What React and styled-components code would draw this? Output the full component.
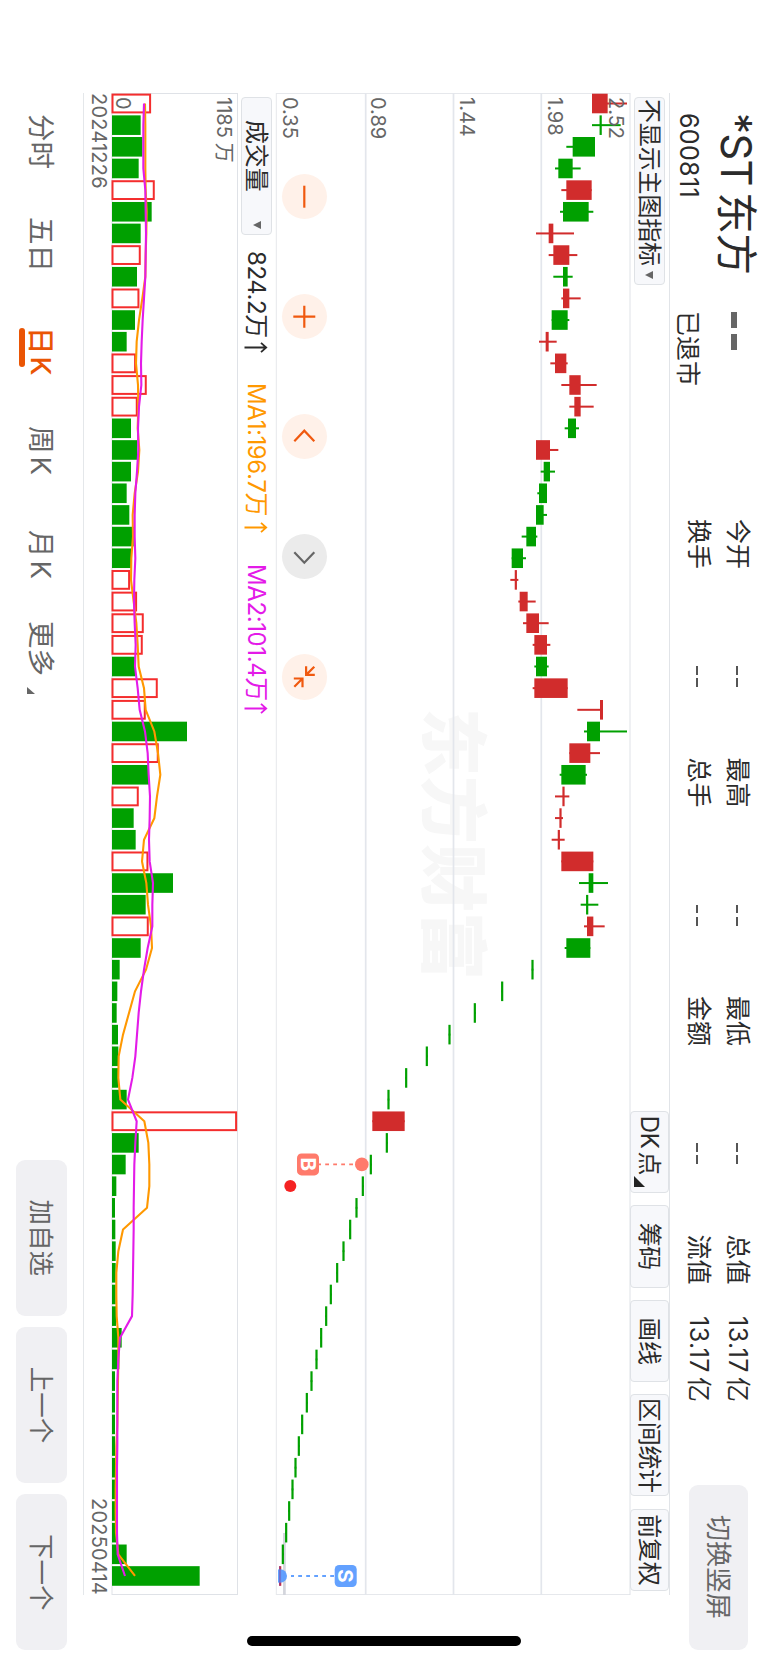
import React from "react";
import styled, { createGlobalStyle, css } from "styled-components";

const GlobalStyle = createGlobalStyle`
  * { box-sizing: border-box; }
  html, body { margin: 0; padding: 0; background: #fff; }
  body { overflow: hidden; font-family: Inter, "Noto Sans CJK SC", sans-serif; color: #2b2b2b; }
`;

/* ---------- data ---------- */

const STEP = 21.654;
const FIRST = 10.5;
const BODY = 19.6;
const at = (i) => FIRST + i * STEP;

// [direction, low, body bottom, body top, high], levels in thirds of a pixel above the chart floor
const CANDLES = [
  ["u", 948, 948, 995, 1053], ["d", 948, 971, 977, 1034], ["d", 871, 890, 957, 957],
  ["d", 837, 847, 890, 914], ["u", 856, 871, 947, 947], ["d", 852, 861, 938, 952],
  ["u", 780, 818, 832, 894], ["u", 818, 832, 880, 904], ["d", 832, 861, 875, 890],
  ["u", 856, 861, 880, 914], ["d", 827, 827, 875, 880], ["u", 789, 809, 818, 842],
  ["u", 823, 837, 871, 875], ["u", 856, 880, 914, 962], ["u", 880, 895, 914, 953],
  ["d", 866, 876, 900, 909], ["u", 780, 780, 822, 847], ["d", 794, 803, 822, 837],
  ["d", 784, 789, 813, 813], ["d", 780, 780, 803, 813], ["d", 737, 751, 780, 784],
  ["d", 707, 707, 741, 750], ["u", 703, 717, 722, 727], ["u", 727, 731, 755, 779],
  ["u", 741, 751, 789, 818], ["u", 770, 775, 813, 823], ["d", 775, 780, 813, 818],
  ["u", 770, 775, 875, 875], ["u", 904, 972, 981, 981], ["d", 924, 933, 972, 1053],
  ["u", 880, 880, 943, 972], ["d", 851, 856, 929, 933], ["u", 837, 860, 865, 880],
  ["u", 837, 851, 856, 861], ["u", 827, 846, 851, 866], ["u", 856, 856, 952, 952],
  ["d", 909, 938, 952, 996], ["d", 914, 931, 936, 967], ["u", 924, 933, 952, 986],
  ["d", 866, 871, 943, 943],
  ...[767, 676, 594, 518, 450, 388, 335].map((v) => ["d", v, v, v + 5, v + 5]),
  ["u", 289, 289, 386, 386],
  ...[330, 282, 258, 239, 220, 200, 181, 162, 148, 133, 119, 104, 90, 76, 66, 56, 47, 37, 28, 18]
    .map((v) => ["d", v, v, v + 5, v + 5]),
  ["s", 10, 10, 15, 15],
];

const UP_VOLUME = new Set([0, 4, 7, 9, 12, 13, 14, 22, 23, 24, 25, 27, 28, 30, 32, 35, 38, 47]);
const VOLUMES = [
  117, 86, 91, 80, 128, 119, 86, 86, 75, 82, 69, 44, 72, 104, 77, 57, 76, 57, 44, 52, 65, 60, 54,
  75, 95, 92, 69, 137, 101, 225, 140, 111, 80, 65, 71, 109, 183, 101, 110, 86, 23, 16, 14, 18, 19,
  19, 44, 375, 80, 41, 13, 9, 10, 11, 11, 11, 12, 29, 22, 9, 9, 9, 9, 9, 9, 9, 13, 44, 263,
];
const MA1 = [
  99, 100, 100, 100, 101, 104, 103, 101, 100, 91, 81, 74, 72, 78, 79, 77, 82, 78, 68, 62, 63, 58,
  57, 65, 73, 77, 80, 96, 101, 127, 138, 145, 135, 127, 96, 90, 103, 108, 117, 120, 102, 69, 51,
  33, 20, 19, 25, 97, 109, 112, 112, 105, 33, 19, 13, 13, 14, 19, 19, 18, 17, 16, 13, 12, 11, 11,
  12, 19, 69,
];
const MA2 = [
  96, 94, 94, 94, 100, 101, 102, 101, 100, 96, 92, 89, 87, 88, 81, 78, 79, 75, 70, 68, 68, 70, 67,
  66, 68, 71, 69, 77, 83, 99, 107, 110, 114, 113, 111, 113, 123, 121, 121, 107, 96, 87, 80, 75,
  70, 61, 48, 74, 70, 67, 66, 65, 65, 64, 63, 62, 60, 24, 19, 16, 16, 16, 16, 15, 15, 15, 15, 17,
  39,
];

const STATS = [
  [["今开", "--"], ["换手", "--"]],
  [["最高", "--"], ["总手", "--"]],
  [["最低", "--"], ["金额", "--"]],
  [["总值", "13.17", "亿"], ["流值", "13.17", "亿"]],
];

/* ---------- frame ---------- */

const Viewport = styled.main`
  width: 768px;
  height: 1663px;
  overflow: hidden;
  background: #fff;
`;

const Landscape = styled.div`
  position: relative;
  width: 1663px;
  height: 768px;
  display: flex;
  flex-direction: column;
  transform-origin: 0 0;
  transform: translateX(768px) rotate(90deg);
  white-space: nowrap;
`;

const HomeIndicator = styled.div`
  position: absolute;
  left: 1636px;
  top: 247px;
  width: 10px;
  height: 274px;
  border-radius: 5px;
  background: #000;
`;

const Unit = styled.span`
  margin-left: ${(p) => p.$gap}px;
`;

/* ---------- header ---------- */

const Header = styled.header`
  height: 98px;
  display: flex;
  padding-left: 113px;
`;

const NameBlock = styled.div`
  width: 198px;
  display: flex;
  flex-direction: column;
`;

const Name = styled.h1`
  margin: 0;
  height: 60px;
  padding-top: 4px;
  font-size: 42px;
  line-height: 56px;
  font-weight: 400;
  letter-spacing: -0.7px;
`;

const Code = styled.div`
  height: 38px;
  font-size: 25px;
  line-height: ${(p) => p.$line || 38}px;
  letter-spacing: ${(p) => p.$track || 0}px;
`;

const PriceBlock = styled.div`
  width: 208px;
  display: flex;
  flex-direction: column;
`;

const BigDashes = styled.div`
  height: 60px;
  display: flex;
  align-items: center;
  gap: 6px;
  padding: 7px 0 0 1px;
  &::before, &::after {
    content: "";
    width: 16px;
    height: 6px;
    background: #666;
  }
`;

const StatGrid = styled.div`
  display: flex;
  gap: 70.5px;
  padding-top: 11px;
`;

const StatColumn = styled.dl`
  margin: 0;
  width: 168px;
`;

const Stat = styled.div`
  height: 39.4px;
  display: flex;
  justify-content: space-between;
  font-size: 25px;
  line-height: 39px;
  dt, dd { margin: 0; }
  dd { letter-spacing: 0.5px; }
`;

const Dashes = styled.dd`
  display: flex;
  align-items: center;
  gap: 3.5px;
  &::before, &::after {
    content: "";
    width: 8.6px;
    height: 2px;
    margin-top: 1px;
    background: #555;
  }
`;

const SwitchButton = styled.button`
  margin: 20px 0 0 82px;
  width: 165px;
  height: 59px;
  border: 0;
  border-radius: 9px;
  background: #f0f0f3;
  font: 26px/56px Inter, "Noto Sans CJK SC", sans-serif;
  color: #666;
  padding: 0;
`;

/* ---------- chart column ---------- */

const Charts = styled.section`
  width: 1502px;
  margin-left: 93px;
  display: flex;
  flex-direction: column;
`;

const Bar = styled.div`
  display: flex;
  align-items: center;
  height: ${(p) => p.$height}px;
  ${(p) => p.$ruled && css`border-top: 1px solid #e1e4e8;`}
`;

const chip = css`
  border: 1px solid #dfe2e6;
  border-radius: 4px;
  background: #f7f8fb;
  color: #2b2b2b;
  font-size: 24px;
  display: flex;
  align-items: center;
`;

const Select = styled.div`
  ${chip}
  width: ${(p) => p.$width}px;
  height: 31px;
  margin-left: 4px;
  padding: 0 ${(p) => p.$right}px 0 ${(p) => p.$left}px;
  justify-content: space-between;
  line-height: 29px;
  letter-spacing: -0.15px;
  &::after {
    content: "";
    border: 4.2px solid transparent;
    border-top: 8px solid #666;
    border-bottom: 0;
  }
`;

const Tools = styled.div`
  margin-left: auto;
  padding-right: 4px;
  display: flex;
  gap: 12.3px;
`;

const Tool = styled.div`
  ${chip}
  position: relative;
  justify-content: ${(p) => (p.$corner ? "flex-start" : "center")};
  padding-left: ${(p) => (p.$corner ? 4 : 0)}px;
  width: ${(p) => p.$width || 82.3}px;
  height: 39px;
  line-height: 35px;
  letter-spacing: -0.3px;
  ${(p) => p.$corner && css`
    &::after {
      content: "";
      position: absolute;
      right: 5px;
      bottom: 3px;
      border-left: 11px solid transparent;
      border-bottom: 11px solid #222;
    }
  `}
`;

const Plot = styled.div`
  position: relative;
  height: ${(p) => p.$height}px;
  svg { display: block; overflow: visible; }
`;

const Controls = styled.div`
  position: absolute;
  left: 80.5px;
  bottom: 6px;
  display: flex;
  gap: 74.8px;
`;

const RoundButton = styled.div`
  width: 45.4px;
  height: 45.4px;
  border-radius: 50%;
  background: ${(p) => (p.$muted ? "#ebebeb" : "#fff1e9")};
  color: ${(p) => (p.$muted ? "#666" : "#f0590f")};
`;

const Reading = styled.span`
  margin-left: ${(p) => p.$gap}px;
  width: ${(p) => p.$width}px;
  color: ${(p) => p.$color};
  font-size: 24px;
  line-height: 34px;
  letter-spacing: -0.4px;
  padding-top: 1px;
  display: flex;
  align-items: center;
  justify-content: space-between;
  svg { flex: none; }
`;

const Dates = styled.div`
  height: 29px;
  display: flex;
  justify-content: space-between;
  border-bottom: 1px solid #e4e7ea;
  font-size: 20px;
  line-height: 27px;
  letter-spacing: 0.2px;
  color: #666;
`;

/* ---------- footer ---------- */

const Footer = styled.footer`
  flex: 1;
  display: flex;
  justify-content: space-between;
  padding: 15px 13px 0 114px;
`;

const Tabs = styled.nav`
  display: flex;
  height: 52px;
`;

const Tab = styled.div`
  width: ${(p) => p.$width}px;
  font-size: 27.5px;
  line-height: 54px;
  color: ${(p) => (p.$active ? "#ea5504" : "#666")};
  font-weight: ${(p) => (p.$active ? 500 : 400)};
  > span {
    position: relative;
    display: inline-block;
  }
  ${(p) => p.$active && css`
    > span::after {
      content: "";
      position: absolute;
      left: 1px;
      top: 42.5px;
      width: 39px;
      height: 6px;
      border-radius: 3px;
      background: #ea5504;
    }
  `}
  ${(p) => p.$more && css`
    > span::after {
      content: "";
      position: absolute;
      left: 66px;
      top: 33px;
      border-left: 7px solid transparent;
      border-bottom: 8px solid #666;
    }
  `}
`;

const Actions = styled.div`
  display: flex;
  gap: 11.5px;
`;

const Action = styled.div`
  width: 155.7px;
  height: 51px;
  margin-top: 1px;
  border-radius: 9px;
  background: #f0f0f3;
  color: #666;
  font-size: 25.5px;
  line-height: 51px;
  text-align: center;
`;

/* ---------- drawings ---------- */

const GREEN = "#00a000";
const RED = "#d12c2c";
const SANS = 'Inter, "Noto Sans CJK SC", sans-serif';

const ICONS = {
  minus: "M-11 0H11",
  plus: "M-11 0H11M0 -11V11",
  left: "M4.5 -10L-6 0L4.5 10",
  right: "M-4.5 -10L6 0L-4.5 10",
  shrink: "M-10 -10L-1.8 -1.8M-1.8 -10.5V-1.8H-10.5M10 10L1.8 1.8M1.8 10.5V1.8H10.5",
};

const Icon = ({ name }) => (
  <svg width="45.4" height="45.4" viewBox="-22.7 -22.7 45.4 45.4">
    <path d={ICONS[name]} fill="none" stroke="currentColor" strokeWidth="2.2" />
  </svg>
);

const Candle = ({ data, i }) => {
  const [dir, low, from, to, high] = data;
  const y = (v) => 354 - v / 3;
  const color = dir === "d" ? GREEN : dir === "u" ? RED : "#e02020";
  const body = Math.max(2.2, (to - from) / 3);
  return (
    <g fill={color}>
      <rect x={at(i) - 1} width="2" y={y(high)} height={(high - low) / 3} />
      <rect x={at(i) - BODY / 2} width={BODY} y={y((from + to) / 2) - body / 2} height={body} />
    </g>
  );
};

const Marker = ({ x, boxY, dotY, from, to, color, letter }) => (
  <g>
    <line x1={x} x2={x} y1={from} y2={to} stroke={color} strokeWidth="1.8" strokeDasharray="3.8 4.2" />
    <circle cx={x} cy={dotY} r="6.8" fill={color} />
    <rect x={x - 11} y={boxY} width="22" height="22" rx="4.5" fill={color} />
    <text x={x} y={boxY + 18.4} textAnchor="middle" fontFamily={SANS} fontSize="20.5" fontWeight="700" fill="#fff">{letter}</text>
  </g>
);

const PRICES = [["2.52", 21], ["1.98", 82], ["1.44", 170], ["0.89", 259], ["0.35", 347]];

const PriceChart = () => (
  <svg width="1502" height="354" viewBox="0 0 1502 354">
    <defs>
      <clipPath id="floor"><rect width="1502" height="352" /></clipPath>
    </defs>
    <text x="615" y="202" fontFamily={SANS} fontSize="68" fontWeight="900" fill="#f7f7f7">东方财富</text>
    <path d="M0.5 0V354M1501.5 0V354M0 353.7H1502" stroke="#e6e8ec" strokeWidth="1" fill="none" />
    <path d="M0 0H1502" stroke="#dfe2e7" strokeWidth="1" />
    <path d="M0 88.7H1502M0 176.5H1502M0 264.3H1502" stroke="#e3e6ec" strokeWidth="1.7" />
    <path d="M1440 345.6H1502" stroke="#d3d5dc" strokeWidth="2.7" />
    {CANDLES.map((c, i) => <Candle key={i} data={c} i={i} />)}
    {PRICES.map(([t, y]) => (
      <text key={t} x="4" y={y} fontFamily={SANS} fontSize="20" fill="#666">{t}</text>
    ))}
    <Marker x={1071.4} boxY={311} dotY={268.2} from={269} to={311} color="#ff7a6b" letter="B" />
    <circle cx="1093" cy="339.7" r="6" fill="#f52222" />
    <g clipPath="url(#floor)" opacity="0.95">
      <Marker x={1483} boxY={273.3} dotY={349.8} from={296} to={339} color="#5b9dff" letter="S" />
    </g>
    <rect x="1473.2" y="349.3" width="19.6" height="1.6" fill="#7a4fb0" opacity="0.6" />
  </svg>
);

const FLOOR = 126;
const line = (values) => values.map((v, i) => `${at(i)},${FLOOR - v / 3}`).join(" ");

const VolumeChart = () => (
  <svg width="1502" height="126" viewBox="0 0 1502 126">
    <path d="M0.5 0V126M1501.5 0V126M0 0.5H1502M0 126H1502" stroke="#dfe2e7" strokeWidth="1" fill="none" />
    {VOLUMES.map((v, i) =>
      UP_VOLUME.has(i) ? (
        <rect key={i} x={at(i) - BODY / 2 + 0.9} width={BODY - 1.8} y={FLOOR + 0.9 - v / 3} height={v / 3 - 1.4} fill="#fff" stroke="#f42d2d" strokeWidth="2" />
      ) : (
        <rect key={i} x={at(i) - BODY / 2} width={BODY} y={FLOOR - v / 3} height={v / 3} fill={GREEN} />
      )
    )}
    <text x="4" y="21" fontFamily={SANS} fontSize="20" fill="#666">1185<tspan dx="5">万</tspan></text>
    <text x="4" y="122" fontFamily={SANS} fontSize="20" fill="#666">0</text>
    <polyline points={line(MA1)} fill="none" stroke="#ff9800" strokeWidth="2.1" />
    <polyline points={line(MA2)} fill="none" stroke="#e31be8" strokeWidth="2.1" />
  </svg>
);

const Arrow = () => (
  <svg width="11" height="24" viewBox="0 0 11 24">
    <path d="M5.5 23.5V2M0.8 7L5.5 1.8L10.2 7" fill="none" stroke="currentColor" strokeWidth="1.8" />
  </svg>
);

export default function App() {
  return (
    <Viewport>
      <GlobalStyle />
      <Landscape>
        <Header>
          <NameBlock>
            <Name>*ST<Unit $gap={6}>东方</Unit></Name>
            <Code $track={0.35}>600811</Code>
          </NameBlock>
          <PriceBlock>
            <BigDashes />
            <Code $line={40}>已退市</Code>
          </PriceBlock>
          <StatGrid>
            {STATS.map((column, c) => (
              <StatColumn key={c}>
                {column.map(([label, value, unit]) => (
                  <Stat key={label}>
                    <dt>{label}</dt>
                    {unit ? <dd>{value}<Unit $gap={4}>{unit}</Unit></dd> : <Dashes />}
                  </Stat>
                ))}
              </StatColumn>
            ))}
          </StatGrid>
          <SwitchButton>切换竖屏</SwitchButton>
        </Header>

        <Charts>
          <Bar $height={40} $ruled>
            <Select $width={188} $left={1} $right={5}>不显示主图指标</Select>
            <Tools>
              <Tool $corner>DK<Unit $gap={3}>点</Unit></Tool>
              <Tool>筹码</Tool>
              <Tool>画线</Tool>
              <Tool $width={102}>区间统计</Tool>
              <Tool>前复权</Tool>
            </Tools>
          </Bar>
          <Plot $height={354}>
            <PriceChart />
            <Controls>
              <RoundButton><Icon name="minus" /></RoundButton>
              <RoundButton><Icon name="plus" /></RoundButton>
              <RoundButton><Icon name="left" /></RoundButton>
              <RoundButton $muted><Icon name="right" /></RoundButton>
              <RoundButton><Icon name="shrink" /></RoundButton>
            </Controls>
          </Plot>
          <Bar $height={38}>
            <Select $width={137.5} $left={22} $right={5}>成交量</Select>
            <Reading $gap={16.5} $width={102} $color="#2b2b2b">824.2万<Arrow /></Reading>
            <Reading $gap={30} $width={150} $color="#ff9800">MA1:196.7万<Arrow /></Reading>
            <Reading $gap={31} $width={150} $color="#e31be8">MA2:101.4万<Arrow /></Reading>
          </Bar>
          <Plot $height={126}><VolumeChart /></Plot>
          <Dates><span>20241226</span><span>20250414</span></Dates>
        </Charts>

        <Footer>
          <Tabs>
            <Tab $width={103}><span>分时</span></Tab>
            <Tab $width={110}><span>五日</span></Tab>
            <Tab $width={99} $active><span>日<Unit $gap={2}>K</Unit></span></Tab>
            <Tab $width={104}><span>周<Unit $gap={3}>K</Unit></span></Tab>
            <Tab $width={91}><span>月<Unit $gap={3}>K</Unit></span></Tab>
            <Tab $width={90} $more><span>更多</span></Tab>
          </Tabs>
          <Actions>
            <Action>加自选</Action>
            <Action>上一个</Action>
            <Action>下一个</Action>
          </Actions>
        </Footer>
        <HomeIndicator />
      </Landscape>
    </Viewport>
  );
}
